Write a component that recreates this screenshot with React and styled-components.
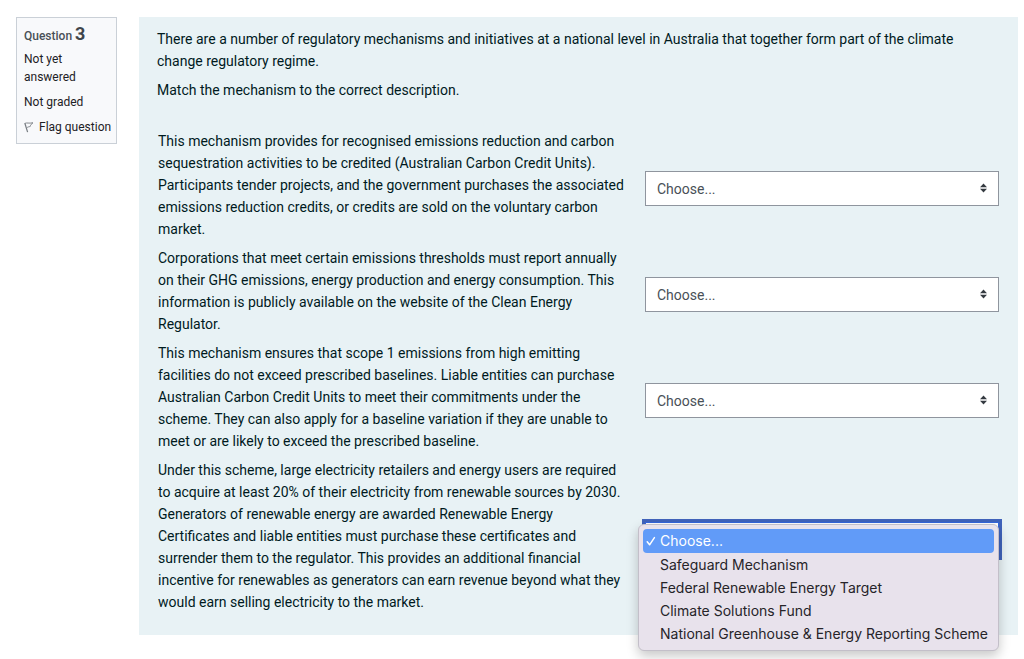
import React from "react";
import styled, { createGlobalStyle, css } from "styled-components";

const GlobalStyle = createGlobalStyle`
  *, *::before, *::after { box-sizing: border-box; }
  body {
    margin: 0;
    background: #fff;
    font-family: Roboto, "Liberation Sans", sans-serif;
    color: #001a1e;
  }
`;

const Page = styled.main`
  display: grid;
  grid-template-columns: 101px minmax(0, 1fr);
  column-gap: 22px;
  align-items: start;
  padding: 17px 6px 24px 16px;
`;

const Info = styled.aside`
  display: flex;
  flex-direction: column;
  gap: 7px;
  padding: 7px 4px 7px 7px;
  border: 1px solid #cad0d7;
  background: #f8f9fb;
  color: #1d2125;
  font-size: 12px;
  line-height: 18px;
`;

const InfoTitle = styled.h3`
  margin: 0 0 -3px;
  font-size: 12px;
  font-weight: 500;
  line-height: 19px;
  color: #495057;
`;

const Number = styled.span`
  font-size: 18px;
  font-weight: 700;
  line-height: 1;
  color: #3f454b;
`;

const InfoText = styled.div`
  padding-right: 16px;
`;

const FlagLink = styled.a`
  display: flex;
  align-items: center;
  gap: 5px;
  color: inherit;
  text-decoration: none;
  white-space: nowrap;

  svg {
    flex: none;
  }
`;

const Formulation = styled.form`
  padding: 11px 19px 15px 18px;
  background: #e8f2f5;
  font-size: 14px;
  line-height: 22px;
`;

const Paragraph = styled.p`
  margin: 0 0 7px;
`;

const Answers = styled.div`
  display: flex;
  flex-direction: column;
  margin: 29px 0 0 1px;
`;

const AnswerRow = styled.div`
  display: grid;
  grid-template-columns: minmax(0, 480fr) minmax(0, 354fr);
  column-gap: 7px;
  align-items: center;
`;

const Description = styled.label`
  padding: 0 12px 7px 0;
`;

const Control = styled.div`
  position: relative;
  display: flex;
`;

const Select = styled.select`
  appearance: none;
  width: 100%;
  height: 35px;
  padding: 0 30px 0 11px;
  border: 1px solid #8f959e;
  border-radius: 0;
  background: #fff;
  color: #495057;
  font: inherit;
  ${(p) =>
    p.$open &&
    css`
      border-color: #3566dc;
      outline: 3px solid #4063bb;
    `}
`;

const Arrows = styled.svg`
  position: absolute;
  right: 12px;
  top: 12px;
  pointer-events: none;
`;

const Menu = styled.ul`
  position: absolute;
  z-index: 1;
  top: 2px;
  left: -7px;
  right: 0;
  margin: 0;
  padding: 4px 4px 5px;
  list-style: none;
  border: 1px solid #c3bfc9;
  border-radius: 6px;
  background: #e8e2ec;
  box-shadow: 0 5px 12px rgba(0, 0, 0, 0.22);
  color: #262429;
  font-family: Inter, "Liberation Sans", sans-serif;
  font-size: 14px;
  line-height: 23px;
`;

const Option = styled.li`
  display: flex;
  align-items: center;
  gap: 4px;
  padding-left: 3px;
  border-radius: 4px;
  white-space: nowrap;
  ${(p) =>
    p.$active &&
    css`
      padding-bottom: 1px;
      background: #619bf8;
      color: #fff;
    `}
`;

const CheckSlot = styled.span`
  display: flex;
  flex: 0 0 10px;
`;

const choices = [
  "Choose...",
  "Safeguard Mechanism",
  "Federal Renewable Energy Target",
  "Climate Solutions Fund",
  "National Greenhouse & Energy Reporting Scheme",
];

const mechanisms = [
  "This mechanism provides for recognised emissions reduction and carbon sequestration activities to be credited (Australian Carbon Credit Units). Participants tender projects, and the government purchases the associated emissions reduction credits, or credits are sold on the voluntary carbon market.",
  "Corporations that meet certain emissions thresholds must report annually on their GHG emissions, energy production and energy consumption. This information is publicly available on the website of the Clean Energy Regulator.",
  "This mechanism ensures that scope 1 emissions from high emitting facilities do not exceed prescribed baselines. Liable entities can purchase Australian Carbon Credit Units to meet their commitments under the scheme. They can also apply for a baseline variation if they are unable to meet or are likely to exceed the prescribed baseline.",
  "Under this scheme, large electricity retailers and energy users are required to acquire at least 20% of their electricity from renewable sources by 2030. Generators of renewable energy are awarded Renewable Energy Certificates and liable entities must purchase these certificates and surrender them to the regulator. This provides an additional financial incentive for renewables as generators can earn revenue beyond what they would earn selling electricity to the market.",
];

function FlagIcon() {
  return (
    <svg width="10" height="12" viewBox="0 0 10 12" fill="none" stroke="#777c81" aria-hidden="true">
      <path d="M0.8 2 L3.6 11.2" strokeWidth="1.2" />
      <path d="M1.2 2.3 C3 1.5 4.5 2.6 9 1.8 C7.5 3 6.5 3.6 6.2 5.5 C5 5.8 3.8 5.8 2.6 7" strokeWidth="0.9" />
    </svg>
  );
}

function AnswerSelect({ id, open }) {
  return (
    <Control>
      <Select id={id} $open={open} defaultValue={choices[0]}>
        {choices.map((c) => (
          <option key={c}>{c}</option>
        ))}
      </Select>
      <Arrows width="7" height="10" viewBox="0 0 7 10" fill="#343a40" aria-hidden="true">
        <path d="M3.5 0.5 L7 4.2 H0 Z M0 5.8 H7 L3.5 9.5 Z" />
      </Arrows>
      {open && (
        <Menu role="listbox" aria-label="Choices">
          {choices.map((c, i) => (
            <Option key={c} role="option" aria-selected={i === 0} $active={i === 0}>
              <CheckSlot>
                {i === 0 && (
                  <svg width="10" height="10" viewBox="0 0 10 10" fill="none" stroke="#fff" strokeWidth="1.5" strokeLinecap="round" strokeLinejoin="round" aria-hidden="true">
                    <path d="M1.2 5.8 L3.6 8.8 L8.4 1.6" />
                  </svg>
                )}
              </CheckSlot>
              {c}
            </Option>
          ))}
        </Menu>
      )}
    </Control>
  );
}

export default function App() {
  return (
    <>
      <GlobalStyle />
      <Page>
        <Info>
          <InfoTitle>
            Question <Number>3</Number>
          </InfoTitle>
          <InfoText>Not yet answered</InfoText>
          <InfoText>Not graded</InfoText>
          <FlagLink href="#flag">
            <FlagIcon />
            Flag question
          </FlagLink>
        </Info>
        <Formulation>
          <Paragraph>
            There are a number of regulatory mechanisms and initiatives at a national level in Australia that together
            form part of the climate change regulatory regime.
          </Paragraph>
          <Paragraph>Match the mechanism to the correct description.</Paragraph>
          <Answers>
            {mechanisms.map((text, i) => (
              <AnswerRow key={i}>
                <Description htmlFor={`answer-${i}`}>{text}</Description>
                <AnswerSelect id={`answer-${i}`} open={i === 3} />
              </AnswerRow>
            ))}
          </Answers>
        </Formulation>
      </Page>
    </>
  );
}
